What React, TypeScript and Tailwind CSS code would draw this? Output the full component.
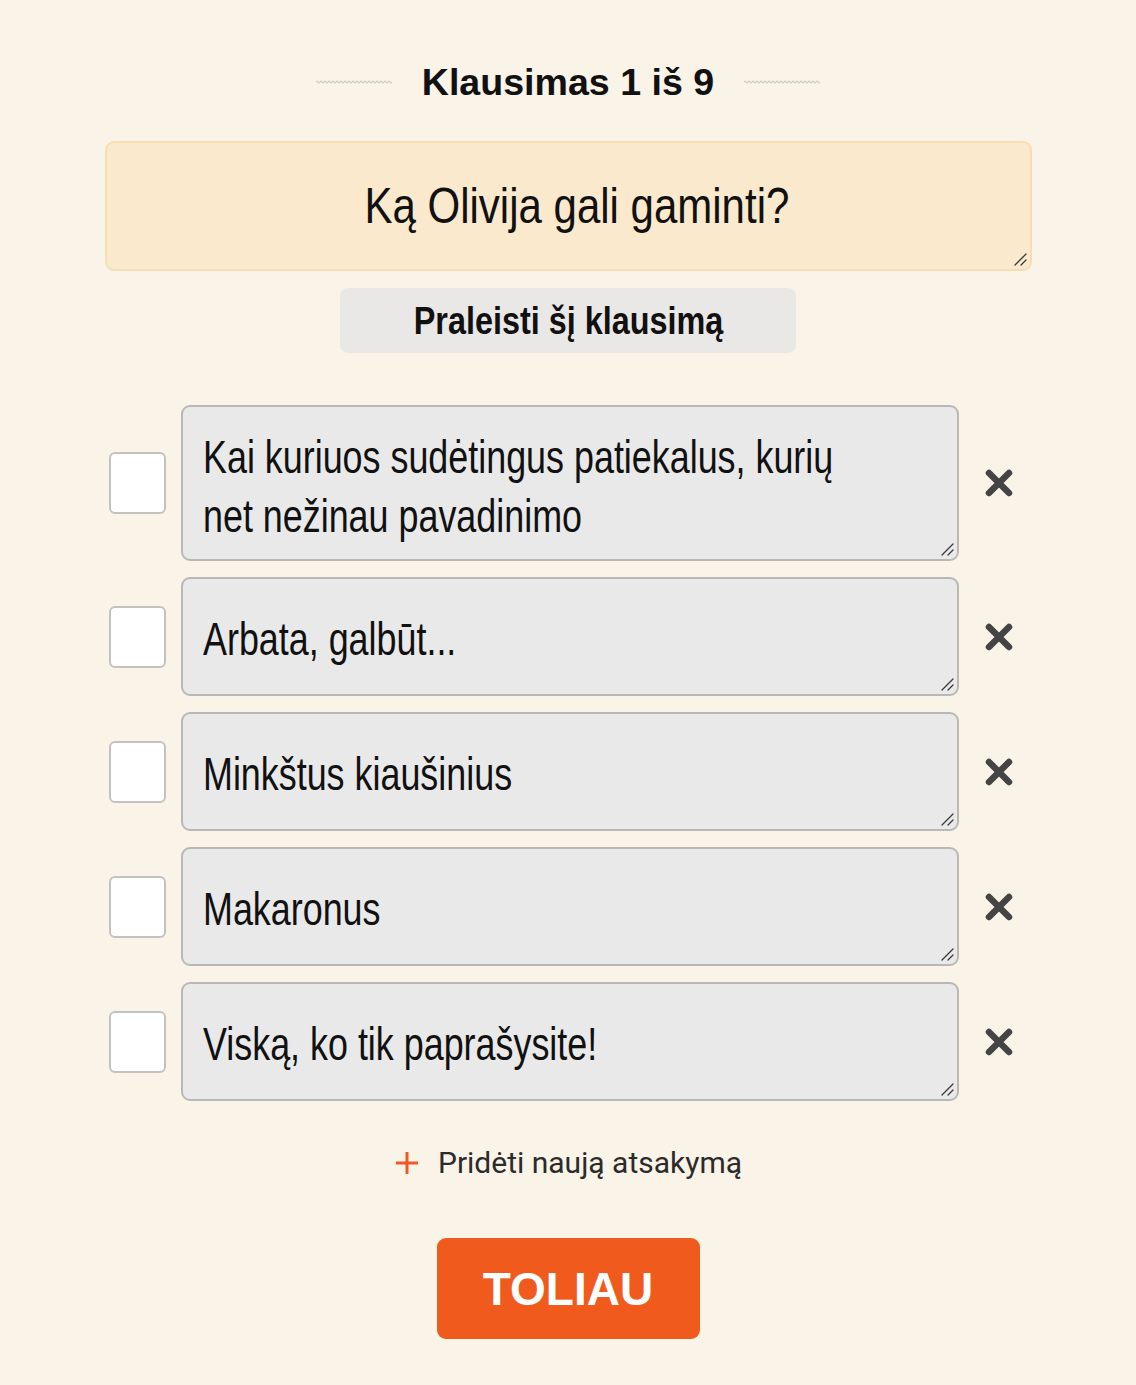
import React from "react";

const answers = [
  ["Kai kuriuos sudėtingus patiekalus, kurių", "net nežinau pavadinimo"],
  ["Arbata, galbūt..."],
  ["Minkštus kiaušinius"],
  ["Makaronus"],
  ["Viską, ko tik paprašysite!"],
];

function Wave() {
  return (
    <svg width="76" height="6" viewBox="0 0 76 6" className="shrink-0">
      <path
        d="M0 3 Q1 1 2 3 T4 3 T6 3 T8 3 T10 3 T12 3 T14 3 T16 3 T18 3 T20 3 T22 3 T24 3 T26 3 T28 3 T30 3 T32 3 T34 3 T36 3 T38 3 T40 3 T42 3 T44 3 T46 3 T48 3 T50 3 T52 3 T54 3 T56 3 T58 3 T60 3 T62 3 T64 3 T66 3 T68 3 T70 3 T72 3 T74 3 T76 3"
        fill="none"
        stroke="#cfcac2"
        strokeWidth="1.2"
      />
    </svg>
  );
}

function Grip() {
  return (
    <svg width="14" height="14" viewBox="0 0 14 14" className="absolute right-[3px] bottom-[3px]">
      <path d="M2 13 L13 2 M8 13 L13 8" stroke="#3a3a3a" strokeWidth="1.3" strokeLinecap="round" />
    </svg>
  );
}

function XIcon() {
  return (
    <svg width="32" height="32" viewBox="0 0 32 32">
      <path d="M6 6 L26 26 M26 6 L6 26" stroke="#444" strokeWidth="6.5" strokeLinecap="round" />
    </svg>
  );
}

export default function App() {
  return (
    <div className="min-h-[1385px] w-full bg-[#faf3e8] flex flex-col items-center pt-[60px] pb-[46px] font-['Liberation_Sans',Arial,sans-serif]">
      <div className="flex items-center gap-[30px] h-[44px]">
        <Wave />
        <h1 className="text-[37.6px] leading-[44px] font-bold text-[#111]">Klausimas 1 iš 9</h1>
        <Wave />
      </div>

      <div className="relative mt-[37px] w-[927px] h-[130px] rounded-[9px] bg-[#fbe9cd] border-2 border-[#f6ddb4] flex items-center justify-center pl-[18px]">
        <span className="inline-block text-[50px] leading-[60px] text-[#111] scale-x-[0.84] whitespace-nowrap">
          Ką Olivija gali gaminti?
        </span>
        <Grip />
      </div>

      <button className="mt-[17px] w-[456px] h-[65px] rounded-[8px] bg-[#e9e8e6] flex items-center justify-center">
        <span className="inline-block text-[39px] leading-[44px] font-bold text-[#111] scale-x-[0.83] whitespace-nowrap">
          Praleisti šį klausimą
        </span>
      </button>

      <div className="mt-[52px] w-[927px] flex flex-col gap-[16px]">
        {answers.map((lines, i) => (
          <div key={i} className="flex items-center">
            <div className="ml-[4px] w-[57px] h-[62px] rounded-[6px] bg-white border-2 border-[#c4c2bf] shrink-0" />
            <div
              className={
                "relative ml-[15px] w-[778px] rounded-[9px] bg-[#e9e9e9] border-2 border-[#b9b8b6] flex flex-col justify-center pl-[20px] " +
                (lines.length > 1 ? "h-[156px] pt-[8px]" : "h-[119px] pt-[6px]")
              }
            >
              {lines.map((l) => (
                <div key={l} className="h-[59px] flex items-center">
                  <span className="inline-block origin-left text-[46px] leading-[59px] text-[#111] scale-x-[0.78] whitespace-nowrap">
                    {l}
                  </span>
                </div>
              ))}
              <Grip />
            </div>
            <div className="ml-[24px] flex items-center">
              <XIcon />
            </div>
          </div>
        ))}
      </div>

      <div className="mt-[42px] flex items-center gap-[18px] h-[40px] font-['Roboto',sans-serif]">
        <svg width="26" height="26" viewBox="0 0 26 26">
          <path d="M13 2 V24 M2 13 H24" stroke="#f05a22" strokeWidth="3" />
        </svg>
        <span className="text-[30px] leading-[40px] text-[#2b2b2b]">Pridėti naują atsakymą</span>
      </div>

      <button className="mt-[55px] w-[263px] h-[101px] rounded-[9px] bg-[#f15a1d] flex items-center justify-center">
        <span className="text-[46px] font-bold text-white leading-none">TOLIAU</span>
      </button>
    </div>
  );
}
